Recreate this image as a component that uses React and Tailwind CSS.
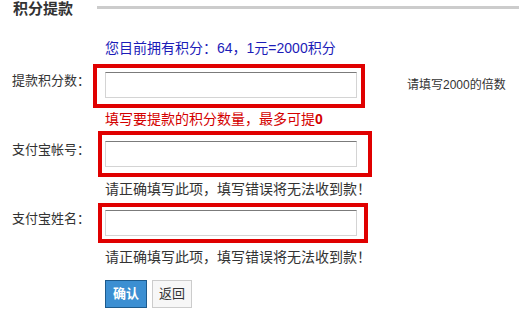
import React from 'react';

const font = { fontFamily: '"Liberation Sans", "Noto Sans CJK SC", sans-serif' };

function Field({ label, className = '' }) {
    return (
        <div className={`flex items-start ${className}`}>
            <label className="w-[105px] pl-[12px] text-[13px] leading-[18px] text-[#333]">{label}</label>
            <input
                type="text"
                className="w-[252px] h-[26px] border border-[#d4d4d4] border-t-[#7b7b7b] bg-white outline-none"
            />
        </div>
    );
}

export default function App() {
    return (
        <div className="relative w-[519px] h-[311px] bg-white overflow-hidden" style={font}>
            <div className="flex items-center h-[17px]">
                <h2 className="pl-[13px] text-[15px] font-bold leading-[17px] text-[#333]">积分提款</h2>
                <div className="flex-1 ml-[24px] h-[3px] bg-[#cccccc] -mt-[3px]" />
            </div>

            <p className="mt-[21px] pl-[105px] text-[14px] leading-[20px] text-[#1c1cb8]">
                您目前拥有积分：64，1元=2000积分
            </p>

            <div className="flex items-center mt-[14px]">
                <Field label="提款积分数：" />
                <span className="ml-[50px] text-[12px] text-[#333]">请填写2000的倍数</span>
            </div>
            <p className="mt-[12px] pl-[105px] text-[14px] leading-[18px] text-[#d40000]">
                填写要提款的积分数量，最多可提<b>0</b>
            </p>

            <Field label="支付宝帐号：" className="mt-[13px]" />
            <p className="mt-[13px] pl-[105px] text-[14px] leading-[18px] text-[#333]">
                请正确填写此项，填写错误将无法收到款！
            </p>

            <Field label="支付宝姓名：" className="mt-[12px]" />
            <p className="mt-[12px] pl-[105px] text-[14px] leading-[18px] text-[#333]">
                请正确填写此项，填写错误将无法收到款！
            </p>

            <div className="flex gap-[5px] mt-[14px] pl-[105px]">
                <button className="w-[42px] h-[28px] border border-[#1d5a8c] bg-[#3c8fd2] text-white text-[13px] font-bold">
                    确认
                </button>
                <button className="w-[40px] h-[28px] border border-[#cccccc] bg-[#f7f7f7] text-[#333] text-[13px]">
                    返回
                </button>
            </div>

            {/* red annotation frames */}
            <div className="absolute left-[93px] top-[64px] w-[272px] h-[44px] border-4 border-[#e00000] pointer-events-none" />
            <div className="absolute left-[98px] top-[131px] w-[274px] h-[46px] border-4 border-[#e00000] pointer-events-none" />
            <div className="absolute left-[98px] top-[203px] w-[270px] h-[40px] border-4 border-[#e00000] pointer-events-none" />
        </div>
    );
}
